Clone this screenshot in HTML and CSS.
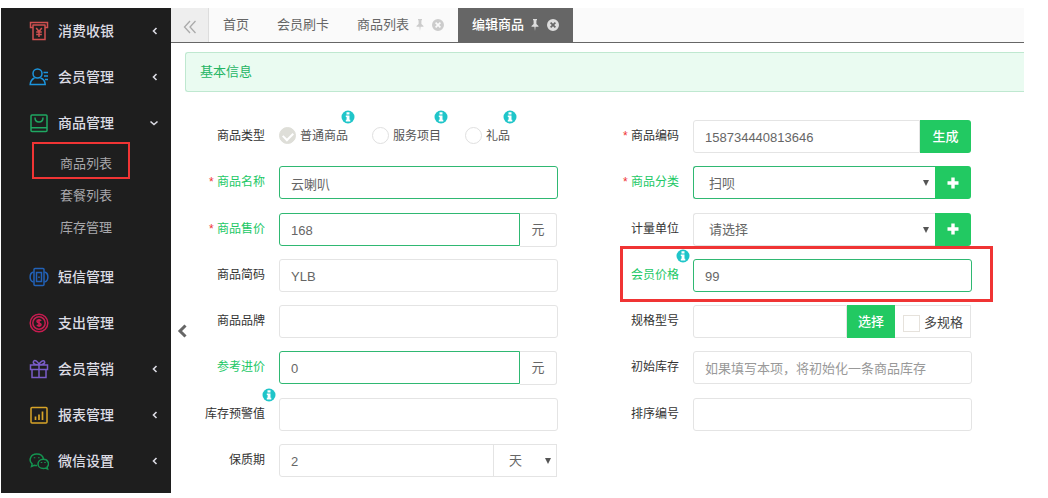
FILE: index.html
```html
<!DOCTYPE html>
<html lang="zh-CN">
<head>
<meta charset="utf-8">
<title>编辑商品</title>
<meta name="viewport" content="width=device-width, initial-scale=1">
<link rel="stylesheet" href="styles.css">
</head>
<body>
<svg class="defs" aria-hidden="true">
  <symbol id="left" viewBox="0 0 8 10"><path d="M5.5 2 2.5 5l3 3" fill="none" stroke="currentColor" stroke-width="1.6"/></symbol>
  <symbol id="down" viewBox="0 0 10 8"><path d="M1.5 2.5 5 5.5l3.500-3" fill="none" stroke="currentColor" stroke-width="1.6"/></symbol>
  <symbol id="info" viewBox="0 0 14 14"><circle cx="7" cy="7" r="6.500" fill="#1fc5c9"/><path d="M5.500 2.200h3v2.200h-3zM4.800 5.400h3.700v4.400H9.300v1.800H4.800V9.800h.8V7h-.8z" fill="#fff"/></symbol>
  <symbol id="pin" viewBox="0 0 8 12"><path d="M2 0h4v1l-.6.500v3.500L7.500 7v.8H4.600L4 12l-.6-4.200H.5V7l2.100-2V1.500L2 1z" fill="currentColor"/></symbol>
  <symbol id="close" viewBox="0 0 12 12"><path fill-rule="evenodd" d="M6 0a6 6 0 1 0 0 12A6 6 0 0 0 6 0zM4.200 3 6 4.800 7.800 3 9 4.200 7.200 6 9 7.800 7.800 9 6 7.200 4.200 9 3 7.800 4.800 6 3 4.200z" fill="currentColor"/></symbol>
  <symbol id="plus" viewBox="0 0 12 12"><path d="M4.300.5h3.400v3.800h3.800v3.400H7.700v3.800H4.300V7.700H.5V4.300h3.800z" fill="#fff"/></symbol>
</svg>

<div class="shell">
  <nav class="sidebar">
    <a class="item" href="#">
      <svg class="icon red" viewBox="0 0 20 20"><path d="M4 6.500H1.500v-5h17v5H16M3.500 4h13M4 4v14.500h12V4"/><path d="M7.200 7 10 10.500 12.800 7M10 10.500V16M7.200 11h5.600M7.200 13.500h5.600"/></svg>
      <span>消费收银</span><svg class="arrow"><use href="#left"/></svg></a>
    <a class="item" href="#">
      <svg class="icon blue" viewBox="0 0 20 20"><circle cx="8.500" cy="6.500" r="4.500"/><path d="M5.500 11C3 12 1.500 14 1.200 17.500h15C16 14 14.500 12 11.500 11M14.500 5.500H19M15 9h4M16 12.500h3"/></svg>
      <span>会员管理</span><svg class="arrow"><use href="#left"/></svg></a>
    <a class="item" href="#">
      <svg class="icon green" viewBox="0 0 20 20"><rect x="2" y="2" width="16" height="16.500" rx="1"/><path d="M2 14.800h16M6 4.500c0 6 8 6 8 0"/></svg>
      <span>商品管理</span><svg class="arrow open"><use href="#down"/></svg></a>
    <div class="submenu">
      <a class="sub marked" href="#">商品列表</a>
      <a class="sub" href="#">套餐列表</a>
      <a class="sub" href="#">库存管理</a>
    </div>
    <a class="item" href="#">
      <svg class="icon navy" viewBox="0 0 20 20"><rect x="5" y="1.500" width="10" height="17" rx="1"/><path d="M7.500 5.500h5v9h-5zM10 9.500v1.500M4.500 5C0 6 0 14 4.500 15M15.500 5c4.500 1 4.500 9 0 10"/></svg>
      <span>短信管理</span></a>
    <a class="item" href="#">
      <svg class="icon pink" viewBox="0 0 20 20"><circle cx="10" cy="10" r="8.800"/><circle cx="10" cy="10" r="6.200"/><path d="M12 8c-.5-1.500-4-1.500-4 .3 0 2 4 1.200 4 3.300 0 1.900-3.500 1.900-4 .2M10 6v8" stroke-width="1.600"/></svg>
      <span>支出管理</span></a>
    <a class="item" href="#">
      <svg class="icon violet" viewBox="0 0 20 20"><path d="M1.500 6h17v4.500h-17zM3 10.500h14v8H3zM10 6v12.500M10 6C7 6 3.500 5 4.500 2.500S9.500 3 10 6c.5-3 4.500-5.500 5.500-3.500S13 6 10 6"/></svg>
      <span>会员营销</span><svg class="arrow"><use href="#left"/></svg></a>
    <a class="item" href="#">
      <svg class="icon gold" viewBox="0 0 20 20"><rect x="2" y="2.500" width="16" height="15.500" rx="1"/><path d="M6.500 15v-3.500M10 15V9.500M13.500 15V6.500" stroke-width="1.700"/></svg>
      <span>报表管理</span><svg class="arrow"><use href="#left"/></svg></a>
    <a class="item" href="#">
      <svg class="icon teal" viewBox="0 0 20 20"><path d="M8 14.500c-1 .1-2 0-2.800-.3L2.500 15.500l.6-2.600C-.8 9.500 1.500 3 7.700 3c3.500 0 6.300 2.100 6.800 5"/><path d="M14.500 8.300c-7.300 0-7.300 9.200 0 9.200.8 0 1.500-.1 2.100-.4l2 .9-.5-1.900c3-3 .8-7.800-3.600-7.800zM5.500 6.300v1M9.800 6.300v1M12.500 11v1M16 11v1"/></svg>
      <span>微信设置</span><svg class="arrow"><use href="#left"/></svg></a>
  </nav>

  <main class="main">
    <div class="tabs">
      <button class="back" type="button" aria-label="向左滚动"><svg viewBox="0 0 14 14"><path d="M7 1 1.500 7 7 13M12.500 1 7 7l5.500 6" fill="none" stroke="currentColor" stroke-width="1.300"/></svg></button>
      <a class="tab" href="#">首页</a>
      <a class="tab" href="#">会员刷卡</a>
      <a class="tab" href="#">商品列表<svg class="pin"><use href="#pin"/></svg><svg class="close"><use href="#close"/></svg></a>
      <a class="tab active" href="#">编辑商品<svg class="pin"><use href="#pin"/></svg><svg class="close"><use href="#close"/></svg></a>
    </div>

    <h1 class="banner">基本信息</h1>

    <button class="handle" type="button" aria-label="收起菜单"><svg viewBox="0 0 10 14"><path d="M8.500 1.500 3 7l5.500 5.500" fill="none" stroke="currentColor" stroke-width="3"/></svg></button>

    <form class="form">
      <div class="row">
        <span class="label">商品类型</span>
        <div class="radios">
          <label class="radio"><input type="radio" name="kind" checked>普通商品<svg class="info"><use href="#info"/></svg></label>
          <label class="radio"><input type="radio" name="kind">服务项目<svg class="info"><use href="#info"/></svg></label>
          <label class="radio"><input type="radio" name="kind">礼品<svg class="info"><use href="#info"/></svg></label>
        </div>
      </div>
      <div class="row">
        <label class="label" for="code"><i>*</i> 商品编码</label>
        <div class="group"><input class="box" id="code" type="text" value="158734440813646"><button class="btn wide" type="button">生成</button></div>
      </div>

      <div class="row valid">
        <label class="label" for="name"><i>*</i> 商品名称</label>
        <div class="group"><input class="box" id="name" type="text" value="云喇叭"></div>
      </div>
      <div class="row valid">
        <label class="label" for="category"><i>*</i> 商品分类</label>
        <div class="group"><span class="picker"><select class="box" id="category"><option>扫呗</option></select></span><button class="btn" type="button" aria-label="新增分类"><svg><use href="#plus"/></svg></button></div>
      </div>

      <div class="row valid">
        <label class="label" for="price"><i>*</i> 商品售价</label>
        <div class="group"><input class="box" id="price" type="text" value="168"><span class="unit">元</span></div>
      </div>
      <div class="row">
        <label class="label" for="measure">计量单位</label>
        <div class="group"><span class="picker"><select class="box" id="measure"><option>请选择</option></select></span><button class="btn" type="button" aria-label="新增单位"><svg><use href="#plus"/></svg></button></div>
      </div>

      <div class="row">
        <label class="label" for="short">商品简码</label>
        <div class="group"><input class="box" id="short" type="text" value="YLB"></div>
      </div>
      <div class="row valid marked-row">
        <label class="label" for="member">会员价格<svg class="info"><use href="#info"/></svg></label>
        <div class="group"><input class="box" id="member" type="text" value="99"></div>
      </div>

      <div class="row">
        <label class="label" for="brand">商品品牌</label>
        <div class="group"><input class="box" id="brand" type="text"></div>
      </div>
      <div class="row">
        <label class="label" for="spec">规格型号</label>
        <div class="group"><input class="box" id="spec" type="text"><button class="btn choose" type="button">选择</button><label class="multi"><input type="checkbox">多规格</label></div>
      </div>

      <div class="row valid">
        <label class="label" for="cost">参考进价</label>
        <div class="group"><input class="box" id="cost" type="text" value="0"><span class="unit">元</span></div>
      </div>
      <div class="row">
        <label class="label" for="stock">初始库存</label>
        <div class="group"><input class="box" id="stock" type="text" placeholder="如果填写本项，将初始化一条商品库存"></div>
      </div>

      <div class="row">
        <label class="label" for="alert">库存预警值<svg class="info"><use href="#info"/></svg></label>
        <div class="group"><input class="box" id="alert" type="text"></div>
      </div>
      <div class="row">
        <label class="label" for="order">排序编号</label>
        <div class="group"><input class="box" id="order" type="text"></div>
      </div>

      <div class="row">
        <label class="label" for="life">保质期</label>
        <div class="group"><input class="box" id="life" type="text" value="2"><span class="picker days"><select class="box" aria-label="保质期单位"><option>天</option></select></span></div>
      </div>
    </form>
  </main>
</div>
</body>
</html>
```
FILE: styles.css
```css
* { box-sizing: border-box; }

body {
  margin: 0;
  padding: 8px 24px 5px 1px;
  background: #fff;
  color: #444;
  font: 13px/20px "Liberation Sans", "Noto Sans CJK SC", sans-serif;
}

a { color: inherit; text-decoration: none; }
button, input, select { font: inherit; color: inherit; margin: 0; }
button { border: 0; padding: 0; cursor: pointer; }
svg { display: block; flex: none; }
.defs { position: absolute; width: 0; height: 0; }

.shell { display: flex; }

/* Sidebar */
.sidebar {
  flex: none;
  width: 170px;
  padding-bottom: 9px;
  background: #1e1e1e;
}
.item {
  display: flex;
  align-items: center;
  height: 46px;
  padding: 0 12px 0 28px;
  color: #dcdce4;
  font-size: 14px;
  font-weight: 500;
}
.item span { flex: 1; margin-left: 9px; }
.icon { width: 20px; height: 20px; fill: none; stroke: currentColor; stroke-width: 1.5; }
.arrow { width: 8px; height: 10px; }
.arrow.open { width: 10px; height: 8px; }
.red { color: #d05050; }
.blue { color: #1c94dc; }
.green { color: #1fa862; }
.navy { color: #2262b8; }
.pink { color: #c81c50; }
.violet { color: #7a5cc8; }
.gold { color: #d8a428; }
.teal { color: #149450; }

.submenu { padding: 2px 0 10px; color: #a8a8ac; }
.sub { display: block; position: relative; padding: 6px 0 6px 59px; }
.marked::after {
  content: "";
  position: absolute;
  inset: -6px 41px 1px 31px;
  border: 2px solid #f03434;
}

/* Tabs */
.main { display: flex; flex: 1; flex-direction: column; position: relative; min-width: 0; }
.tabs {
  display: flex;
  height: 35px;
  background: #fafafa;
  border-bottom: 1px solid #666;
}
.back {
  display: grid;
  place-items: center;
  width: 38px;
  padding-top: 4px;
  background: #eee;
  border-right: 1px solid #ddd;
  color: #aaa;
}
.back svg { width: 14px; height: 14px; }
.tab { display: flex; align-items: center; padding: 0 14px; color: #666; }
.active { background: #666; color: #fff; font-weight: 500; }
.pin { width: 8px; height: 12px; margin: 0 8px 0 7px; color: #ccc; }
.close { width: 12px; height: 12px; color: #ccc; }
.active .pin, .active .close { color: #ddd; }

.banner {
  margin: 9px 0 0 14px;
  padding: 9px 14px;
  border: 1px solid #bfe8d0;
  border-right: 0;
  border-radius: 3px 0 0 3px;
  background: #eafbf1;
  color: #25b564;
  font-size: 13px;
  font-weight: 400;
}

.handle {
  position: absolute;
  top: 316px;
  left: 6px;
  background: none;
  color: #666;
}
.handle svg { width: 10px; height: 14px; }

/* Form */
.form {
  display: grid;
  flex: 1;
  grid-template-columns: 1fr 1fr;
  align-content: space-between;
  column-gap: 41px;
  padding: 28px 52px 16px 14px;
}
.row {
  display: grid;
  grid-template-columns: 80px 1fr;
  column-gap: 14px;
  position: relative;
  height: 33px;
}
.label {
  position: relative;
  color: #333;
  font-size: 12px;
  line-height: 32px;
  text-align: right;
}
.label i { color: #f03434; font-style: normal; }
.valid .label { color: #22c866; }
.info { position: absolute; top: -10px; right: -11px; width: 14px; height: 14px; }

.group { display: flex; min-width: 0; color: #666; }
.box {
  flex: 1;
  width: 100%;
  min-width: 0;
  height: 33px;
  padding: 2px 11px 0;
  border: 1px solid #e4e4e4;
  border-radius: 3px;
  outline: 0;
  background: #fff;
}
.box::placeholder { color: #999; opacity: 1; }
.box:not(:last-child) { border-top-right-radius: 0; border-bottom-right-radius: 0; }
.valid .box { border-color: #2fb872; }

.picker { display: flex; flex: 1; position: relative; }
.picker .box { padding-left: 15px; border-right: 0; border-radius: 3px 0 0 3px; appearance: none; }
.picker::after {
  content: "";
  position: absolute;
  top: 14px;
  right: 6px;
  border: 3px solid transparent;
  border-top: 6px solid #555;
  border-bottom: 0;
}
.days { flex: none; width: 63px; margin-right: 1px; }
.days .box { margin-left: -1px; border-right: 1px solid #e4e4e4; border-radius: 0; }

.unit {
  width: 37px;
  margin-right: 1px;
  border: 1px solid #e4e4e4;
  border-left: 0;
  border-radius: 0 3px 3px 0;
  line-height: 32px;
  text-align: center;
}

.btn {
  display: grid;
  flex: none;
  place-items: center;
  width: 36px;
  margin-right: 1px;
  border-radius: 0 3px 3px 0;
  background: #22c962;
  color: #fff;
  font-weight: 500;
}
.btn svg { width: 12px; height: 12px; }
.wide { width: 51px; }
.choose { width: 48px; margin: 0; border-radius: 0; }

.multi {
  display: flex;
  flex: none;
  align-items: center;
  gap: 4px;
  margin-right: 1px;
  padding: 3px 7px 0 8px;
  border: 1px solid #e4e4e4;
  border-left: 0;
  color: #444;
}
.multi input {
  width: 17px;
  height: 17px;
  border: 1px solid #e6e2dc;
  background: #fff;
  appearance: none;
}

.radios { display: flex; gap: 24px; }
.radio {
  display: flex;
  align-items: center;
  gap: 4px;
  position: relative;
  height: 31px;
  color: #555;
  font-size: 12px;
}
.radio input {
  display: grid;
  place-items: center;
  width: 17px;
  height: 17px;
  border: 1px solid #e0e0e0;
  border-radius: 50%;
  background: #fff;
  appearance: none;
}
.radio input:checked { border-color: #deded8; background: #deded8; }
.radio input:checked::before {
  content: "";
  width: 8px;
  height: 5px;
  border: solid #fff;
  border-width: 0 0 2px 2px;
  transform: rotate(-45deg);
}
.radio .info { right: -7px; }

.marked-row::after {
  content: "";
  position: absolute;
  inset: -13px -21px -10px 21px;
  border: 3px solid #f03434;
  pointer-events: none;
}
```
